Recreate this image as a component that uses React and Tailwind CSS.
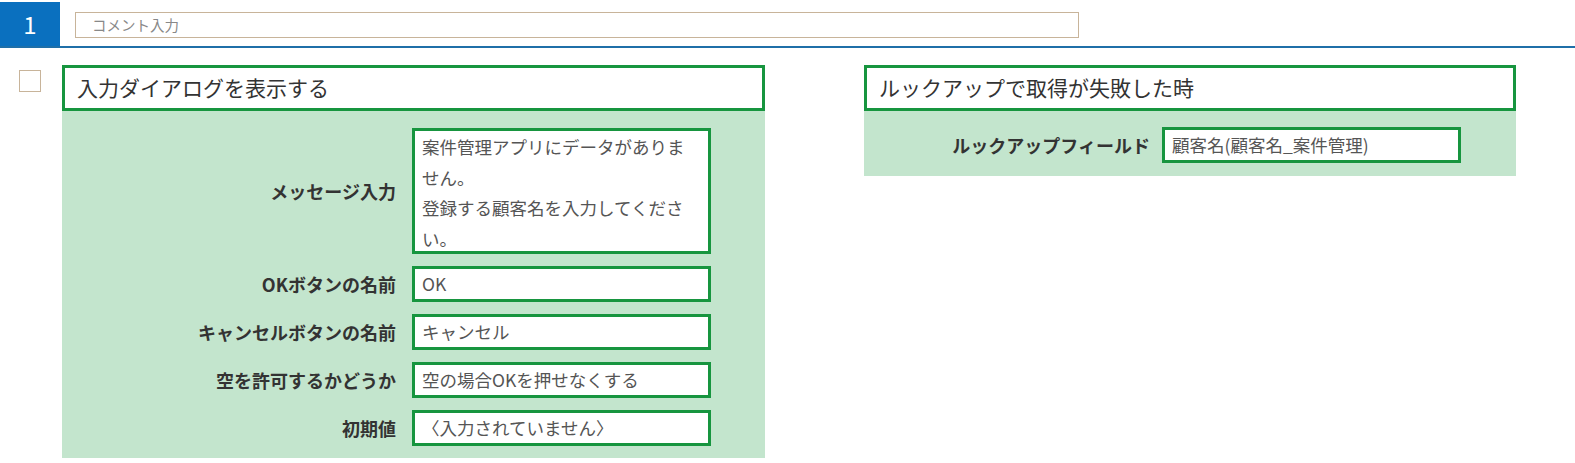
export default function App() {
  const font = { fontFamily: '"Noto Sans CJK JP", "Noto Sans", sans-serif' };

  const rows = [
    { label: 'OKボタンの名前', value: 'OK' },
    { label: 'キャンセルボタンの名前', value: 'キャンセル' },
    { label: '空を許可するかどうか', value: '空の場合OKを押せなくする' },
    { label: '初期値', value: '〈入力されていません〉' },
  ];

  return (
    <div className="w-[1575px] h-[463px] bg-white text-[#333]" style={font}>
      {/* header */}
      <div className="flex items-end border-b-2 border-[#1f6fa8] h-[48px]">
        <div className="w-[60px] h-[44px] bg-[#0a70bf] text-white text-[24px] flex items-center justify-center">
          1
        </div>
        <div className="self-start mt-[12px] ml-[15px] w-[1004px] h-[26px] border border-[#c8b49a] flex items-center pl-[16px] text-[14.5px] text-[#888]">
          コメント入力
        </div>
      </div>

      <div className="flex pt-[17px]">
        {/* checkbox */}
        <div className="w-[62px] pl-[19px] pt-[5px]">
          <div className="w-[22px] h-[22px] border border-[#c8b49a]"></div>
        </div>

        {/* left panel */}
        <div className="w-[703px] bg-[#c3e5cd]">
          <div className="h-[46px] border-[3px] border-[#17953f] bg-white flex items-center pl-[12px] text-[21px]">
            入力ダイアログを表示する
          </div>
          <div className="pt-[17px] pb-[12px] flex flex-col gap-[12px]">
            <div className="grid grid-cols-[334px_299px] gap-x-[16px] items-center">
              <div className="text-right font-bold text-[18px]">メッセージ入力</div>
              <div className="h-[126px] border-[3px] border-[#17953f] bg-white pl-[7px] pr-[10px] pt-[1px] text-[17.5px] leading-[30.5px] text-[#555]">
                案件管理アプリにデータがありません。
                <br />
                登録する顧客名を入力してください。
              </div>
            </div>
            {rows.map(r => (
              <div key={r.label} className="grid grid-cols-[334px_299px] gap-x-[16px] items-center">
                <div className="text-right font-bold text-[18px]">{r.label}</div>
                <div className="h-[36px] border-[3px] border-[#17953f] bg-white px-[7px] flex items-center text-[17.5px] text-[#555]">
                  {r.value}
                </div>
              </div>
            ))}
          </div>
        </div>

        <div className="w-[99px]"></div>

        {/* right panel */}
        <div className="w-[652px] self-start bg-[#c3e5cd]">
          <div className="h-[46px] border-[3px] border-[#17953f] bg-white flex items-center pl-[12px] text-[21px]">
            ルックアップで取得が失敗した時
          </div>
          <div className="pt-[16px] pb-[13px]">
            <div className="grid grid-cols-[286px_299px] gap-x-[12px] items-center">
              <div className="text-right font-bold text-[18px]">ルックアップフィールド</div>
              <div className="h-[36px] border-[3px] border-[#17953f] bg-white px-[7px] flex items-center text-[17.5px] text-[#555]">
                顧客名(顧客名_案件管理)
              </div>
            </div>
          </div>
        </div>
      </div>
    </div>
  );
}
